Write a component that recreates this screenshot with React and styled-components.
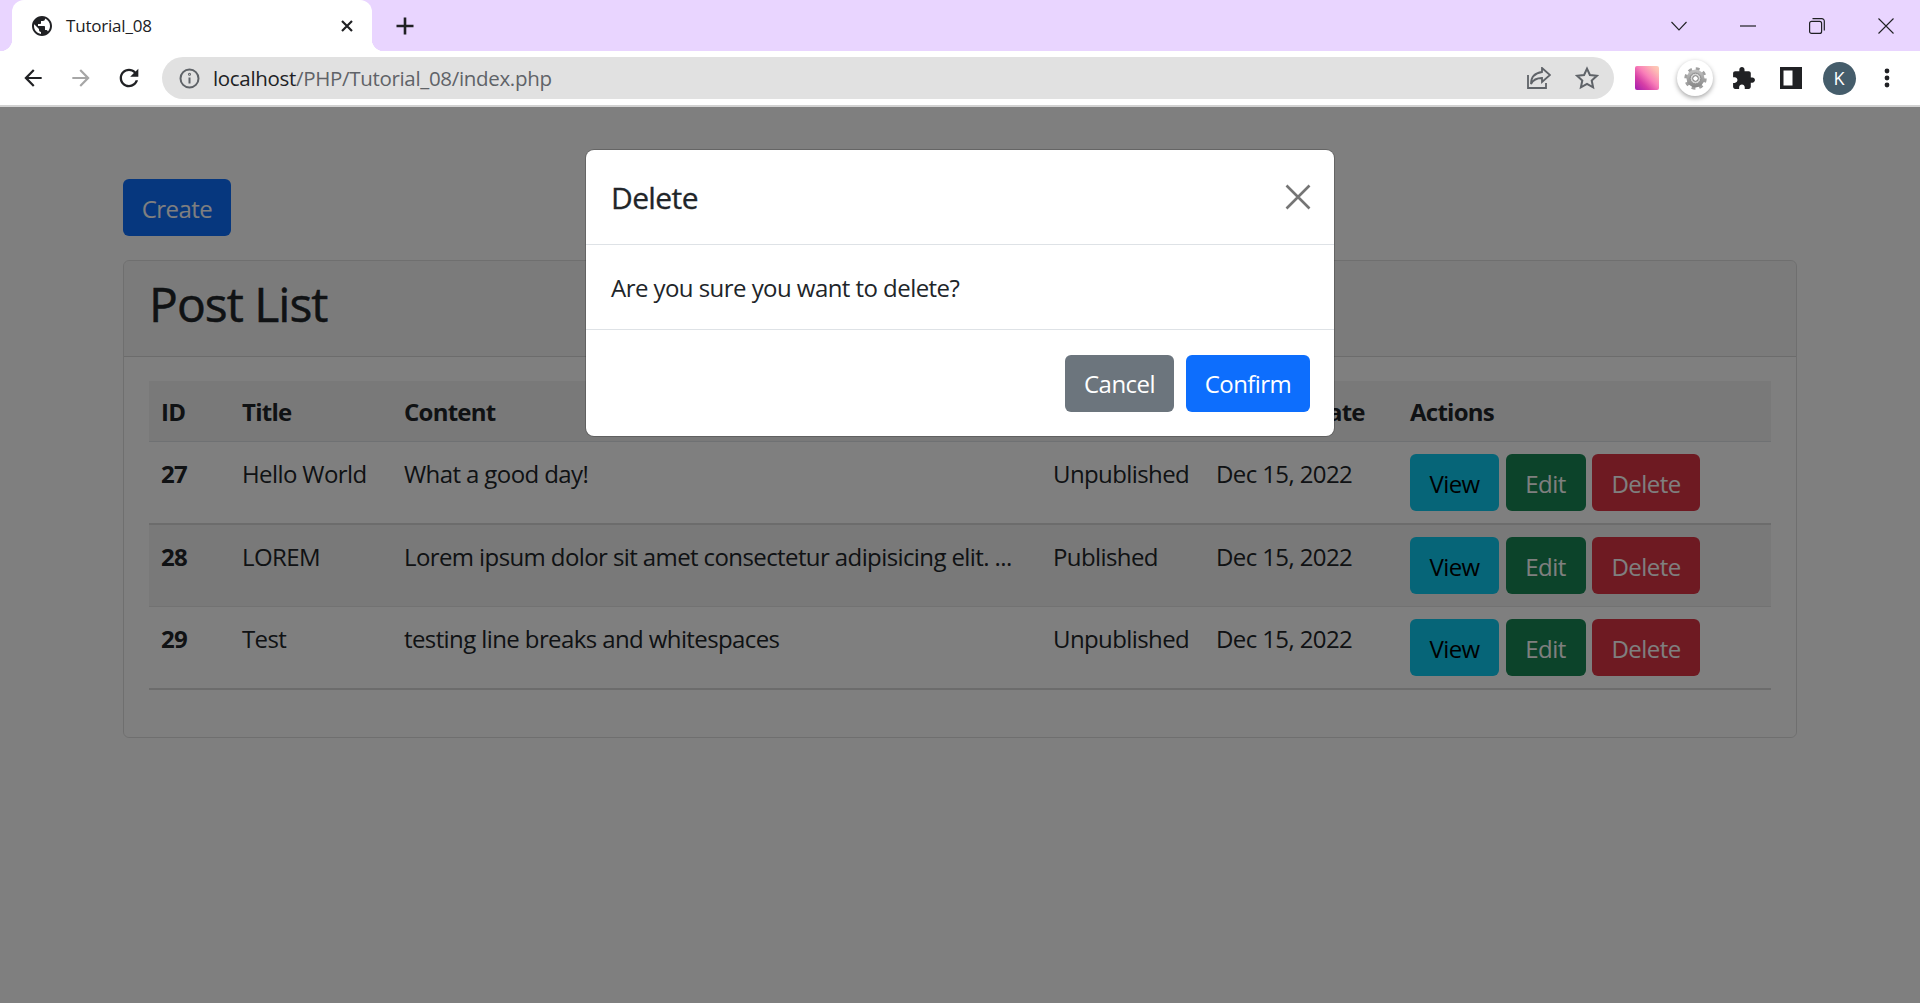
import React from 'react';
import styled, { createGlobalStyle } from 'styled-components';

const FONT = `"Open Sans", "Noto Sans", "Liberation Sans", sans-serif`;

const Global = createGlobalStyle`
  html, body { margin: 0; padding: 0; background: #fff; }
  body { font-family: ${FONT}; color: #212529; }
  * { box-sizing: border-box; }
`;

const Window = styled.div`
  width: 1920px;
  height: 1003px;
  display: flex;
  flex-direction: column;
  overflow: hidden;
`;

const TabBar = styled.div`
  height: 51px;
  background: #e9d5ff;
  display: flex;
  align-items: center;
  flex: none;
`;

const Tab = styled.div`
  position: relative;
  margin-left: 12px;
  width: 360px;
  height: 51px;
  background: #fff;
  border-radius: 12px 12px 0 0;
  display: flex;
  align-items: center;
  padding: 0 18px 0 18px;
  &::before, &::after {
    content: '';
    position: absolute;
    bottom: 0;
    width: 12px;
    height: 12px;
  }
  &::before { left: -12px; background: radial-gradient(circle at 0 0, transparent 12px, #fff 12.5px); }
  &::after { right: -12px; background: radial-gradient(circle at 100% 0, transparent 12px, #fff 12.5px); }
`;

const TabTitle = styled.span`
  flex: 1;
  margin-left: 12px;
  font-size: 17px;
  letter-spacing: -0.2px;
  color: #202124;
  white-space: nowrap;
`;

const NewTab = styled.div`
  margin-left: 23px;
  display: flex;
`;

const WindowControls = styled.div`
  margin-left: auto;
  display: flex;
  align-items: center;
  height: 42px;
`;

const WindowButton = styled.div`
  width: 69px;
  display: flex;
  justify-content: center;
  align-items: center;
`;

const Toolbar = styled.div`
  height: 54px;
  background: #fff;
  display: flex;
  align-items: center;
  padding: 0 9px;
  flex: none;
`;

const ToolSlot = styled.div`
  width: 48px;
  height: 42px;
  flex: none;
  display: flex;
  align-items: center;
  justify-content: center;
`;

const UrlBar = styled.div`
  flex: 1;
  height: 42px;
  margin: 0 9px;
  border-radius: 21px;
  background: #e1e1e1;
  display: flex;
  align-items: center;
  padding: 0 3px;
`;

const UrlText = styled.div`
  flex: 1;
  font-size: 20.5px;
  letter-spacing: -0.32px;
  color: #5f6368;
  white-space: nowrap;
  span { color: #202124; }
`;

const Divider = styled.div`
  height: 2px;
  background: #d2d2d2;
  flex: none;
`;

const Swatch = styled.div`
  width: 24px;
  height: 24px;
  border-radius: 2px;
  background: linear-gradient(45deg, #a21caf 0%, #d63fa6 30%, #f97fb8 55%, #fdbdb4 85%, #fdcfb8 100%);
`;

const GearBubble = styled.div`
  width: 36px;
  height: 36px;
  border-radius: 50%;
  background: #fff;
  box-shadow: 0 2px 5px rgba(0, 0, 0, 0.35);
  display: flex;
  align-items: center;
  justify-content: center;
`;

const Avatar = styled.div`
  width: 33px;
  height: 33px;
  border-radius: 50%;
  background: #455d6b;
  color: #fff;
  font-size: 18px;
  display: flex;
  align-items: center;
  justify-content: center;
`;

const Page = styled.main`
  position: relative;
  flex: 1;
  background: #fff;
  padding: 72px 123px 0;
`;

const Btn = styled.button`
  width: ${p => p.$w}px;
  height: 57px;
  flex: none;
  border: 0;
  border-radius: 6px;
  padding: 2px 0 0;
  font: 400 24px/36px ${FONT};
  letter-spacing: -0.55px;
  background: ${p => p.$bg};
  color: ${p => p.$fg || '#fff'};
`;

const Card = styled.section`
  margin-top: 24px;
  height: 478px;
  border: 1px solid rgba(0, 0, 0, 0.125);
  border-radius: 6px;
  overflow: hidden;
`;

const CardHeader = styled.header`
  height: 96px;
  padding: 0 25px 10px;
  background: rgba(0, 0, 0, 0.03);
  border-bottom: 1px solid rgba(0, 0, 0, 0.125);
  display: flex;
  align-items: center;
`;

const Heading = styled.h1`
  margin: 0;
  font-size: 48px;
  font-weight: 500;
  letter-spacing: -1px;
  line-height: 58px;
  color: #212529;
  -webkit-text-stroke: 0.5px #212529;
`;

const CardBody = styled.div`
  padding: 24px 25px;
`;

const Table = styled.table`
  width: 1622px;
  table-layout: fixed;
  border-collapse: separate;
  border-spacing: 0;
  font-size: 24px;
  line-height: 36px;
  letter-spacing: -0.6px;
`;

const Th = styled.th`
  height: 61px;
  padding: 2px 12px 0;
  text-align: left;
  font-weight: 700;
  background: #f2f2f2;
  border-bottom: 1px solid #dee2e6;
  letter-spacing: -0.75px;
`;

const Row = styled.tr`
  background: ${p => (p.$striped ? '#f2f2f2' : 'transparent')};
`;

const Td = styled.td`
  height: 82px;
  padding: 12px;
  vertical-align: top;
  white-space: nowrap;
  overflow: hidden;
  font-weight: ${p => (p.$bold ? 700 : 400)};
  border-bottom: ${p => (p.$thick ? 2 : 1)}px solid ${p => (p.$thick ? '#d8d8d8' : '#e4e4e4')};
`;

const CellText = styled.div`
  padding-top: 2px;
`;

const Actions = styled.div`
  display: flex;
  gap: 6.5px;
`;

const Backdrop = styled.div`
  position: absolute;
  inset: 0;
  background: rgba(0, 0, 0, 0.5);
  display: flex;
  justify-content: center;
  padding-top: 43px;
`;

const Modal = styled.div`
  width: 748px;
  height: 286px;
  background: #fff;
  border-radius: 8px;
  box-shadow: 0 0 0 1px rgba(0, 0, 0, 0.2);
  display: flex;
  flex-direction: column;
`;

const ModalHeader = styled.div`
  height: 95px;
  border-bottom: 1px solid #dee2e6;
  padding: 0 23px 0 25px;
  display: flex;
  align-items: center;
  justify-content: space-between;
`;

const ModalTitle = styled.h5`
  margin: 0;
  font-size: 30px;
  font-weight: 500;
  letter-spacing: -0.62px;
  color: #212529;
  -webkit-text-stroke: 0.3px #212529;
`;

const ModalBody = styled.div`
  height: 85px;
  border-bottom: 1px solid #dee2e6;
  padding: 0 25px;
  display: flex;
  align-items: center;
  font-size: 24px;
  letter-spacing: -0.55px;
`;

const ModalFooter = styled.div`
  flex: 1;
  padding: 0 24px;
  display: flex;
  align-items: center;
  justify-content: flex-end;
  gap: 12px;
`;

const I = ({ d, size = 24, fill = '#202124', view = 24 }) => (
  <svg width={size} height={size} viewBox={`0 0 ${view} ${view}`} fill={fill}><path d={d} /></svg>
);

const Stroke = ({ w, h, color = '#202124', sw = 1.4, children }) => (
  <svg width={w} height={h} viewBox={`0 0 ${w} ${h}`} fill="none" stroke={color} strokeWidth={sw}>{children}</svg>
);

const Gear = () => (
  <svg width="25" height="25" viewBox="0 0 25 25">
    <defs>
      <linearGradient id="g" x1="0" y1="0" x2="0" y2="1">
        <stop offset="0" stopColor="#c4c4c4" />
        <stop offset="1" stopColor="#858585" />
      </linearGradient>
    </defs>
    <circle cx="12.5" cy="12.5" r="9.5" fill="none" stroke="#a0a0a0" strokeWidth="3.4" strokeDasharray="3.7 3.76" />
    <circle cx="12.5" cy="12.5" r="9" fill="url(#g)" />
    <circle cx="12.5" cy="12.5" r="5.4" fill="#d4d4d4" stroke="#8a8a8a" />
    <circle cx="12.5" cy="12.5" r="2.8" fill="#fff" stroke="#777" />
  </svg>
);

const rows = [
  { id: 27, title: 'Hello World', content: 'What a good day!', status: 'Unpublished' },
  { id: 28, title: 'LOREM', content: 'Lorem ipsum dolor sit amet consectetur adipisicing elit. ...', status: 'Published', striped: true },
  { id: 29, title: 'Test', content: 'testing line breaks and whitespaces', status: 'Unpublished' },
];

export default function App() {
  return (
    <Window>
      <Global />
      <TabBar>
        <Tab>
          <I size={24} d="M12 2C6.48 2 2 6.48 2 12s4.48 10 10 10 10-4.48 10-10S17.52 2 12 2zm-1 17.93c-3.95-.49-7-3.85-7-7.93 0-.62.08-1.21.21-1.79L9 15v1c0 1.1.9 2 2 2v1.93zm6.9-2.54c-.26-.81-1-1.39-1.9-1.39h-1v-3c0-.55-.45-1-1-1H8v-2h2c.55 0 1-.45 1-1V7h2c1.1 0 2-.9 2-2v-.41c2.93 1.19 5 4.06 5 7.41 0 2.08-.8 3.97-2.1 5.39z" />
          <TabTitle>Tutorial_08</TabTitle>
          <Stroke w={14} h={14} sw={2.2}><path d="M2 2l10 10M12 2L2 12" /></Stroke>
        </Tab>
        <NewTab>
          <Stroke w={20} h={20} sw={2.6}><path d="M10 1.5v17M1.5 10h17" /></Stroke>
        </NewTab>
        <WindowControls>
          <WindowButton><Stroke w={16} h={10} sw={1.1}><path d="M.5 1l7.5 8 7.5-8" /></Stroke></WindowButton>
          <WindowButton><Stroke w={16} h={2} sw={1.2}><path d="M0 1h16" /></Stroke></WindowButton>
          <WindowButton>
            <Stroke w={16} h={16} sw={1.2}>
              <rect x=".6" y="3.4" width="12" height="12" rx="2" />
              <path d="M3.5 .7h9.3a2.5 2.5 0 0 1 2.5 2.5v9.3" />
            </Stroke>
          </WindowButton>
          <WindowButton><Stroke w={16} h={16} sw={1.1}><path d="M.5.5l15 15M15.5.5l-15 15" /></Stroke></WindowButton>
        </WindowControls>
      </TabBar>
      <Toolbar>
        <ToolSlot><I size={26} d="M20 11H7.83l5.59-5.59L12 4l-8 8 8 8 1.41-1.41L7.83 13H20v-2z" /></ToolSlot>
        <ToolSlot><I size={26} fill="#a6a6a6" d="M4 11h12.17l-5.59-5.59L12 4l8 8-8 8-1.41-1.41L16.17 13H4v-2z" /></ToolSlot>
        <ToolSlot><I size={28} d="M17.65 6.35C16.2 4.9 14.21 4 12 4c-4.42 0-7.99 3.58-7.99 8s3.57 8 7.99 8c3.73 0 6.84-2.55 7.73-6h-2.08c-.82 2.33-3.04 4-5.65 4-3.31 0-6-2.69-6-6s2.69-6 6-6c1.66 0 3.14.69 4.22 1.78L13 11h7V4l-2.35 2.35z" /></ToolSlot>
        <UrlBar>
          <ToolSlot>
            <svg width="21" height="21" viewBox="0 0 21 21" fill="none" stroke="#5f6368" strokeWidth="2">
              <circle cx="10.5" cy="10.5" r="9" />
              <path d="M10.5 9.5v6" />
              <circle cx="10.5" cy="6.3" r=".5" />
            </svg>
          </ToolSlot>
          <UrlText><span>localhost</span>/PHP/Tutorial_08/index.php</UrlText>
          <ToolSlot>
            <Stroke w={24} h={22} color="#5f6368" sw={1.8}>
              <path d="M1 8v13h18v-5" />
              <path d="M15 1l8 7-8 7v-4c-6 0-9 2-11 6 0-7 4-11 11-12V1z" />
            </Stroke>
          </ToolSlot>
          <ToolSlot>
            <Stroke w={24} h={24} color="#5f6368" sw={2}>
              <path d="M12 2.6l2.9 6.4 6.9.8-5.1 4.7 1.4 6.9-6.1-3.5-6.1 3.5 1.4-6.9-5.1-4.7 6.9-.8z" />
            </Stroke>
          </ToolSlot>
        </UrlBar>
        <ToolSlot><Swatch /></ToolSlot>
        <ToolSlot><GearBubble><Gear /></GearBubble></ToolSlot>
        <ToolSlot><I size={25} d="M20.5 11H19V7c0-1.1-.9-2-2-2h-4V3.5C13 2.12 11.88 1 10.5 1S8 2.12 8 3.5V5H4c-1.1 0-1.99.9-1.99 2v3.8H3.5c1.49 0 2.7 1.21 2.7 2.7s-1.21 2.7-2.7 2.7H2V20c0 1.1.9 2 2 2h3.8v-1.5c0-1.49 1.21-2.7 2.7-2.7 1.49 0 2.7 1.21 2.7 2.7V22H17c1.1 0 2-.9 2-2v-4h1.5c1.38 0 2.5-1.12 2.5-2.5S21.88 11 20.5 11z" /></ToolSlot>
        <ToolSlot>
          <svg width="22" height="22" viewBox="0 0 22 22" fill="#202124">
            <path fillRule="evenodd" d="M0 0h22v22H0zM3.5 3.5v15h9v-15z" />
          </svg>
        </ToolSlot>
        <ToolSlot><Avatar>K</Avatar></ToolSlot>
        <ToolSlot>
          <svg width="6" height="20" viewBox="0 0 6 20" fill="#202124">
            <circle cx="3" cy="3" r="2.4" /><circle cx="3" cy="10" r="2.4" /><circle cx="3" cy="17" r="2.4" />
          </svg>
        </ToolSlot>
      </Toolbar>
      <Divider />
      <Page>
        <Btn $w={108} $bg="#0d6efd">Create</Btn>
        <Card>
          <CardHeader><Heading>Post List</Heading></CardHeader>
          <CardBody>
            <Table>
              <colgroup>
                <col width="81" /><col width="162" /><col width="649" /><col width="163" /><col width="194" /><col width="373" />
              </colgroup>
              <thead>
                <tr>
                  <Th>ID</Th><Th>Title</Th><Th>Content</Th><Th>Status</Th><Th>Created Date</Th><Th>Actions</Th>
                </tr>
              </thead>
              <tbody>
                {rows.map((r, i) => {
                  const thick = i !== 1;
                  return (
                    <Row key={r.id} $striped={r.striped}>
                      <Td $bold $thick={thick}><CellText>{r.id}</CellText></Td>
                      <Td $thick={thick}><CellText>{r.title}</CellText></Td>
                      <Td $thick={thick}><CellText>{r.content}</CellText></Td>
                      <Td $thick={thick}><CellText>{r.status}</CellText></Td>
                      <Td $thick={thick}><CellText>Dec 15, 2022</CellText></Td>
                      <Td $thick={thick}>
                        <Actions>
                          <Btn $w={89} $bg="#0dcaf0" $fg="#000">View</Btn>
                          <Btn $w={80} $bg="#198754">Edit</Btn>
                          <Btn $w={108} $bg="#dc3545">Delete</Btn>
                        </Actions>
                      </Td>
                    </Row>
                  );
                })}
              </tbody>
            </Table>
          </CardBody>
        </Card>
        <Backdrop>
          <Modal>
            <ModalHeader>
              <ModalTitle>Delete</ModalTitle>
              <Stroke w={26} h={26} color="#757575" sw={2.6}><path d="M1.5 1.5l23 23M24.5 1.5l-23 23" /></Stroke>
            </ModalHeader>
            <ModalBody>Are you sure you want to delete?</ModalBody>
            <ModalFooter>
              <Btn $w={109} $bg="#6c757d">Cancel</Btn>
              <Btn $w={124} $bg="#0d6efd">Confirm</Btn>
            </ModalFooter>
          </Modal>
        </Backdrop>
      </Page>
    </Window>
  );
}
